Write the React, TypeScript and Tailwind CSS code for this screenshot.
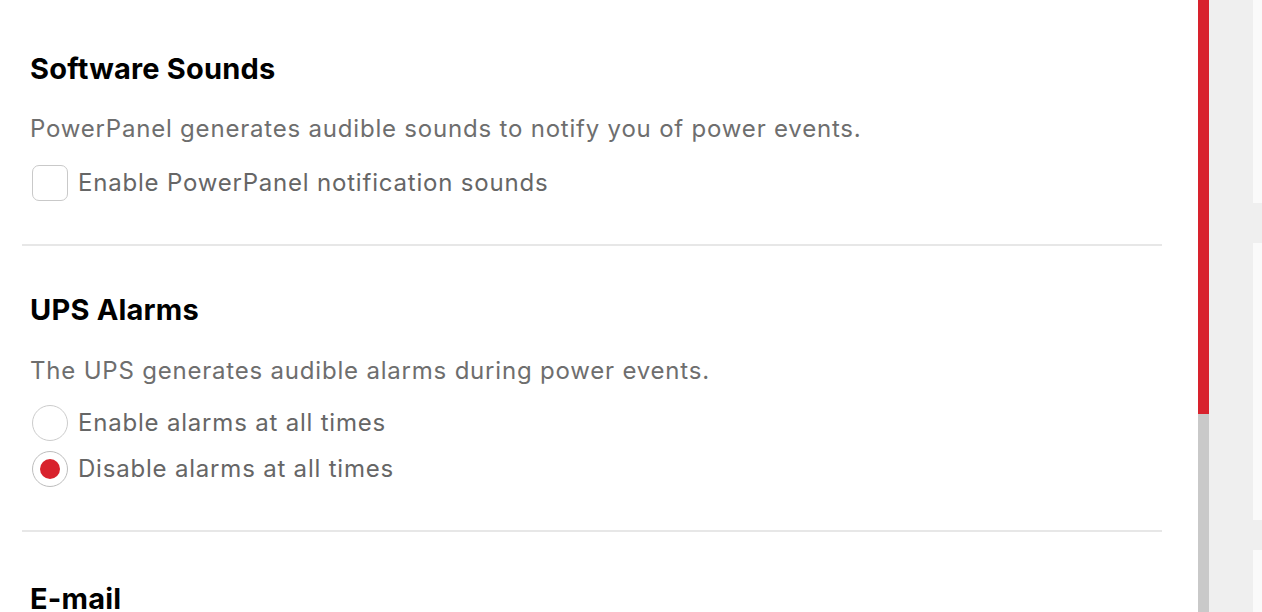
import React from 'react';

const font = { fontFamily: 'Inter, "Noto Sans", sans-serif' };

const Divider = () => <div className="ml-[22px] w-[1140px] h-[2px] bg-[#e7e7e7]" />;

const SectionTitle: React.FC<{ children: React.ReactNode; className: string }> = ({ children, className }) => (
  <h2
    className={`ml-[30px] h-[32px] leading-[32px] text-[29px] font-bold text-black tracking-[0.2px] ${className}`}
  >
    {children}
  </h2>
);

const Description: React.FC<{ children: React.ReactNode; first?: boolean }> = ({ children, first }) => (
  <p
    className={`ml-[30px] h-[30px] leading-[30px] text-[24px] tracking-[0.8px] text-[#6e6e6e] ${
      first ? 'mt-[29px]' : 'mt-[30px]'
    }`}
  >
    {children}
  </p>
);

const Checkbox: React.FC<{ label: string }> = ({ label }) => (
  <label className="ml-[32px] flex items-center h-[46px] gap-[10px]">
    <span className="w-[36px] h-[36px] rounded-[7px] border-[1.5px] border-[#c9c9c9] bg-white" />
    <span className="text-[24px] tracking-[0.8px] text-[#666666]">{label}</span>
  </label>
);

const Radio: React.FC<{ label: string; checked?: boolean }> = ({ label, checked }) => (
  <label className="ml-[32px] flex items-center h-[46px] gap-[10px]">
    <span
      className={`w-[36px] h-[36px] rounded-full border-[1.5px] bg-white flex items-center justify-center ${
        checked ? 'border-[#bdbdbd]' : 'border-[#cccccc]'
      }`}
    >
      {checked && <span className="w-[20px] h-[20px] rounded-full bg-[#d8222d]" />}
    </span>
    <span className="text-[24px] tracking-[0.8px] text-[#666666]">{label}</span>
  </label>
);

export default function App() {
  return (
    <div className="flex w-[1262px] h-[612px] overflow-hidden bg-white" style={font}>
      <div className="w-[1198px] flex flex-col">
        <Divider />
        <SectionTitle className="mt-[53px]">Software Sounds</SectionTitle>
        <Description first>PowerPanel generates audible sounds to notify you of power events.</Description>
        <div className="mt-[16px]">
          <Checkbox label="Enable PowerPanel notification sounds" />
        </div>
        <div className="mt-[38px]">
          <Divider />
        </div>
        <SectionTitle className="mt-[48px]">UPS Alarms</SectionTitle>
        <Description>The UPS generates audible alarms during power events.</Description>
        <div className="mt-[14px] flex flex-col">
          <Radio label="Enable alarms at all times" />
          <Radio label="Disable alarms at all times" checked />
        </div>
        <div className="mt-[38px]">
          <Divider />
        </div>
        <SectionTitle className="mt-[51px]">E-mail</SectionTitle>
      </div>

      {/* scrollbar */}
      <div className="w-[11px] flex flex-col">
        <div className="h-[414px] bg-[#d8222d]" />
        <div className="flex-1 bg-[#c9c9c9]" />
      </div>
      <div className="w-[44px] bg-[#efefef]" />
      <div className="w-[9px] flex flex-col bg-[#fafafa]">
        <div className="mt-[203px] h-[40px] bg-[#efefef]" />
        <div className="mt-[277px] h-[30px] bg-[#efefef]" />
      </div>
    </div>
  );
}
